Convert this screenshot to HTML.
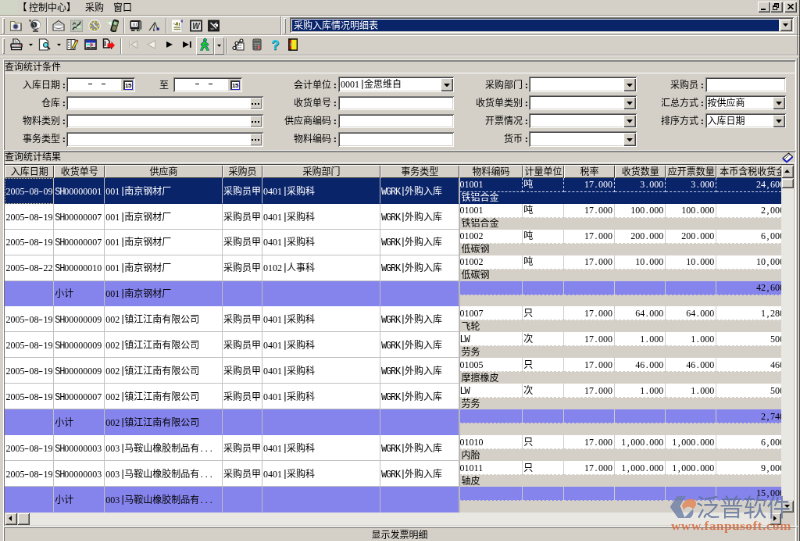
<!DOCTYPE html><html><head><meta charset="utf-8"><title>采购入库情况明细表</title><style>
html,body{margin:0;padding:0;background:#d4d0c8;overflow:hidden;width:800px;height:541px}
#app{position:absolute;left:0;top:0;width:1024px;height:693px;transform:scale(0.78125);transform-origin:0 0;will-change:transform;
 font-family:"Liberation Serif","Noto Sans CJK SC",sans-serif;font-size:12px;line-height:12px;color:#000;background:#d4d0c8;overflow:hidden}
#app div,#app span,#app svg{position:absolute;box-sizing:border-box;white-space:nowrap}
#app span.l{position:static;font-family:"Liberation Mono","Noto Sans CJK SC",monospace;letter-spacing:-1.2px;font-size:12px}
#app span.d{position:static;font-family:"Liberation Serif","Noto Sans CJK SC",serif}
#app span.p{position:static;display:inline-block;width:6px;text-align:center;font-family:"Liberation Serif","Noto Sans CJK SC",serif}
#app span.t{position:static}
.sunk{background:#fff;box-shadow:inset 1px 1px 0 #808080,inset -1px -1px 0 #fff,inset 2px 2px 0 #404040,inset -2px -2px 0 #d4d0c8}
.btn{background:#d4d0c8;box-shadow:inset 1px 1px 0 #fff,inset -1px -1px 0 #404040,inset -2px -2px 0 #808080}
.btn2{background:#d4d0c8;box-shadow:inset 1px 1px 0 #d4d0c8,inset -1px -1px 0 #404040,inset 2px 2px 0 #fff,inset -2px -2px 0 #808080}
.hd{background:#d4d0c8;box-shadow:inset 1px 1px 0 #fff,inset -1px -1px 0 #404040;text-align:center;height:17px;top:210.8px;padding-top:3px;overflow:hidden}
.lb{text-align:right;height:12px}
.grip{width:3px;box-shadow:inset 1px 1px 0 #fff,inset -1px -1px 0 #808080}
.sep{width:2px;border-left:1px solid #808080;border-right:1px solid #fff}
.c{overflow:hidden;height:32.93px;padding:10.8px 0 0 1px;border-right:1px solid #c0c0c0;border-bottom:1px solid #c0c0c0}
.r{overflow:hidden;height:18px;padding:2.5px 2px 0 1px;border-right:1px solid #cdcdcd;border-bottom:1px dashed #d4d0c8}
.r.sel{border-right:1px dashed #c8d0e8;border-bottom:1px dashed #c8d0e8}
.r.n{text-align:right}
.m{overflow:hidden;height:15px;padding:1.5px 0 0 3px;background:#d4d0c8}
#app span.b{font-family:"Liberation Mono",monospace;font-size:13px;position:relative;top:-1px}
#app span.h{transform:scaleX(1.5)}
.sel,.sel span{color:#fff}
</style></head><body><div id="app">
<div style="left:0;top:0;width:23px;height:18.5px;background:#d1d5c6"></div>
<div style="left:22.5px;top:4px">【<span class="t" style="margin-left:2.5px">控制中心】</span></div>
<div style="left:109px;top:4px">采购</div>
<div style="left:145px;top:4px">窗口</div>
<div class="btn" style="left:970px;top:2px;width:16px;height:14px">
<div style="left:4px;top:9px;width:6px;height:2px;background:#000"></div>
</div>
<div class="btn" style="left:986px;top:2px;width:16px;height:14px">
<div style="left:5px;top:2px;width:6px;height:6px;border:1px solid #000;border-top-width:2px"></div>
<div style="left:3px;top:5px;width:6px;height:6px;border:1px solid #000;border-top-width:2px;background:#d4d0c8"></div>
</div>
<div class="btn" style="left:1004px;top:2px;width:16px;height:14px">
<svg style="left:4px;top:3px" width="8" height="7" viewBox="0 0 8 7"><path d="M0.5 0 L7.5 7 M7.5 0 L0.5 7" stroke="#000" stroke-width="1.6" fill="none"/></svg>
</div>
<div style="left:0;top:19px;width:1024px;height:1px;background:#a8a49c"></div>
<div style="left:0;top:20.5px;width:1024px;height:1px;background:#fff"></div>
<div style="left:0;top:44.3px;width:1024px;height:1px;background:#a09c94"></div>
<div style="left:0;top:45.3px;width:1024px;height:1px;background:#fff"></div>
<div style="left:0;top:70px;width:1024px;height:1px;background:#a09c94"></div>
<div style="left:0;top:71px;width:1024px;height:1px;background:#fff"></div>
<div class="grip" style="left:3px;top:23px;height:20px"></div>
<div class="grip" style="left:3px;top:49px;height:20px"></div>
<div class="sep" style="left:359px;top:21px;height:24px"></div>
<div class="grip" style="left:363px;top:23px;height:20px"></div>
<div style="left:1020px;top:21px;width:1px;height:50px;background:#707070"></div>
<svg style="left:12px;top:25px" width="16" height="16" viewBox="0 0 16 16"><path d="M1.5 14V2.5h5l1 2h7V14z" fill="#f2f1ea"/><path d="M1.5 14V2.5h5l1 2h7" fill="none" stroke="#7c7c48" stroke-width="1.1"/><path d="M1 14h14V4.5" fill="none" stroke="#303030" stroke-width="1.2"/><circle cx="8" cy="9" r="3.8" fill="#b0b4cc"/><circle cx="8" cy="9" r="2.7" fill="#3a3f68"/></svg><svg style="left:37px;top:25px" width="16" height="16" viewBox="0 0 16 16"><rect x="0.5" y="0.5" width="2" height="2" fill="#101010"/><circle cx="8.5" cy="6.5" r="5.8" fill="#ececec" stroke="#4a4a4a" stroke-width="1.1"/><path d="M11 2.5a5 5 0 0 1 1 8" stroke="#fff" stroke-width="2" fill="none"/><circle cx="6.6" cy="6.8" r="3.7" fill="#2a3040"/><path d="M5.5 4.5l2.5 4" stroke="#a8a050" stroke-width="1.3"/><path d="M8.5 12v2" stroke="#404040" stroke-width="2.2"/><path d="M5 15h7" stroke="#303030" stroke-width="1.6"/></svg><svg style="left:67px;top:25px" width="16" height="16" viewBox="0 0 16 16"><path d="M1 6.5L8 1.5l7 5V14H1z" fill="#f0f0f0" stroke="#404040" stroke-width="1.2"/><path d="M2.5 7l5.5-3.5L13.5 7v1.5h-11z" fill="#b8b8b8"/><path d="M2.5 8.5h11" stroke="#fff" stroke-width="1.4"/><path d="M1.5 8.5c3 4 10 4 13 0" fill="none" stroke="#707070" stroke-width="1"/></svg><svg style="left:90px;top:25px" width="16" height="16" viewBox="0 0 16 16"><rect x="0.5" y="1" width="15" height="14.5" fill="#bcc4b8" stroke="#a0a49c" stroke-width="1"/><path d="M3 13l2-3 3 .5 1-3 3-2 1-3" stroke="#262a26" stroke-width="1.5" fill="none"/><path d="M3 7l2-3 2 2" stroke="#3a423a" stroke-width="1.2" fill="none"/><path d="M8 10l5-1" stroke="#e8ffe8" stroke-width="1.6"/><rect x="10" y="8.5" width="3.5" height="2.5" fill="#b8f0b8"/></svg><svg style="left:113px;top:25px" width="16" height="16" viewBox="0 0 16 16"><circle cx="8" cy="8" r="7.3" fill="#8e8e8e" stroke="#f4f4f4" stroke-width="1.2"/><g fill="#f4ec20"><rect x="7.2" y="1.6" width="1.6" height="2.4"/><rect x="7.2" y="12" width="1.6" height="2.4"/><rect x="1.6" y="7.2" width="2.4" height="1.6"/><rect x="12" y="7.2" width="2.4" height="1.6"/><rect x="3.4" y="3.4" width="1.8" height="1.8"/><rect x="10.8" y="3.4" width="1.8" height="1.8"/><rect x="3.4" y="10.8" width="1.8" height="1.8"/><rect x="10.8" y="10.8" width="1.8" height="1.8"/></g><path d="M8.4 8.4L5.8 4.2M8 8.2l3.4 1.6" stroke="#fff" stroke-width="1.3"/></svg><svg style="left:136px;top:25px" width="16" height="16" viewBox="0 0 16 16"><path d="M0.5 2.5l6 .5 .5 5z" fill="#f4fff4"/><path d="M1 2l4 1" stroke="#a8e8b0" stroke-width="1.4"/><g transform="rotate(16 10.5 8)"><rect x="7.5" y="0.6" width="6.4" height="15" rx="1.8" fill="#3c3c30" stroke="#0c0c0c" stroke-width="1.2"/><rect x="8.6" y="2.6" width="4.2" height="4.2" fill="#98d8a0"/><rect x="8.6" y="8" width="4.2" height="5.6" fill="#7c8464"/><path d="M13.5 2v11" stroke="#8a8a40" stroke-width=".8"/></g></svg><svg style="left:166px;top:25px" width="16" height="16" viewBox="0 0 16 16"><rect x="0.5" y="1" width="14" height="11.5" rx="1.5" fill="#1c1c1c"/><rect x="2" y="3" width="8.5" height="6.5" fill="#f8f8f8"/><path d="M4.5 4.5v3.5M6.5 4.5v3.5M8.5 4.5v3.5" stroke="#808080" stroke-width=".9"/><path d="M12 2.5h3.5v10H12z" fill="#6c6c6c"/><path d="M2 13.8h4.5M9 13.8h4" stroke="#181818" stroke-width="1.8"/><rect x="11" y="13" width="2.4" height="1.4" fill="#70b070"/></svg><svg style="left:189px;top:25px" width="16" height="16" viewBox="0 0 16 16"><path d="M2 14L9.5 3.5" stroke="#282828" stroke-width="1.2" fill="none"/><path d="M9.5 3.5L7.5 14M9.5 3.5l3 8" stroke="#404040" stroke-width="1" fill="none"/><path d="M7 13.8h2" stroke="#202020" stroke-width="1.4"/><rect x="11.5" y="10.5" width="3.2" height="3.2" fill="#18247c"/><rect x="11.5" y="0.5" width="1.8" height="2.6" fill="#b8ecb8"/></svg><svg style="left:219px;top:25px" width="16" height="16" viewBox="0 0 16 16"><rect x="1" y="0.5" width="13" height="15" fill="#fdfdfd"/><rect x="13" y="0.5" width="2" height="14" fill="#c8c8d8"/><rect x="12.5" y="0.5" width="2.5" height="3" fill="#5a5aa0"/><path d="M2.5 5.5l2-1.2v2.4z" fill="#909050"/><rect x="6" y="3.5" width="3" height="4" fill="#8c8c38"/><path d="M5 6.5h1M10.5 4v4" stroke="#707030" stroke-width="1.2"/><path d="M3.5 10h8.5M3.5 12.5h8.5" stroke="#8a8a4a" stroke-width="1.5"/></svg><svg style="left:243px;top:25px" width="16" height="16" viewBox="0 0 16 16"><rect x="1" y="1.5" width="14" height="13" fill="#d8d8d8" stroke="#2c2c2c" stroke-width="2"/><rect x="2.6" y="3.1" width="10.8" height="9.8" fill="none" stroke="#f4f4f4" stroke-width=".8"/><text x="8" y="12" font-family="Liberation Sans,sans-serif" font-style="italic" font-weight="bold" font-size="10" text-anchor="middle" fill="#282828">W</text></svg><svg style="left:266px;top:25px" width="16" height="16" viewBox="0 0 16 16"><rect x="0.8" y="1.3" width="13.4" height="13.4" fill="#262626" stroke="#161616" stroke-width="1.4"/><path d="M3.5 4l7.5 7.5M11.5 4L7 8" stroke="#f0f0f0" stroke-width="1.5" fill="none"/><rect x="10" y="6" width="3" height="3" fill="#fff"/><path d="M3.5 12h4" stroke="#d0d0d0" stroke-width="1"/></svg><div class="sep" style="left:59px;top:23px;height:20px"></div><div class="sep" style="left:158px;top:23px;height:20px"></div><div class="sep" style="left:212px;top:23px;height:20px"></div>
<svg style="left:13px;top:49px" width="16" height="16" viewBox="0 0 16 16"><path d="M4 7V1h5l3 3v3" fill="#fff" stroke="#202020" stroke-width="1.2"/><path d="M5.5 3h2.5M5.5 5h4.5" stroke="#606060" stroke-width="1"/><rect x="1" y="7" width="14" height="4.6" rx="1" fill="#d0d0d0" stroke="#101010" stroke-width="1.5"/><rect x="1.6" y="11.6" width="12.8" height="3" fill="#fff" stroke="#101010" stroke-width="1.3"/><rect x="11.5" y="8.5" width="2.5" height="1.2" fill="#f04848"/></svg><svg style="left:49px;top:49px" width="16" height="16" viewBox="0 0 16 16"><path d="M1.5 1h8l3 3v11h-11z" fill="#fff" stroke="#303030" stroke-width="1.2"/><circle cx="9.5" cy="8.5" r="3" fill="#50e0e8" stroke="#303030" stroke-width="1.2"/><path d="M8.5 7.5l1 1" stroke="#fff" stroke-width="1"/><path d="M11.8 10.8l3.2 3.4" stroke="#202020" stroke-width="1.8"/></svg><svg style="left:85px;top:49px" width="16" height="16" viewBox="0 0 16 16"><rect x="1" y="1.5" width="10" height="13" fill="#fff" stroke="#303030" stroke-width="1"/><path d="M3 3v10" stroke="#303030" stroke-width="1.4" stroke-dasharray="1 1"/><path d="M6 2v12" stroke="#202020" stroke-width="1"/><path d="M14 2.5L8 13" stroke="#202020" stroke-width="3.4"/><path d="M13.4 3.8L8.3 12.6" stroke="#f0e020" stroke-width="1.8"/><path d="M14.3 2l-.8 1.5" stroke="#e02020" stroke-width="2"/><path d="M7.5 14.5l.6-2 1 .8z" fill="#202020"/></svg><svg style="left:108px;top:49px" width="16" height="16" viewBox="0 0 16 16"><rect x="1" y="2" width="14" height="12" fill="#e0e0e0" stroke="#181818" stroke-width="1.6"/><rect x="1.6" y="2.6" width="12.8" height="3" fill="#1830c0"/><rect x="3" y="7" width="4" height="2" fill="#40e0e0"/><rect x="8.6" y="6.6" width="2" height="3.4" fill="#e02020"/><rect x="11" y="7" width="3" height="3" fill="#d0d0ff"/><path d="M2.5 11.8h5M8.5 11.8h5.5" stroke="#303030" stroke-width="1.8"/><path d="M8 6v7" stroke="#404040" stroke-width=".8"/></svg><svg style="left:131px;top:49px" width="16" height="16" viewBox="0 0 16 16"><path d="M1.5 1h5l2.5 2.5V12h-7.5z" fill="#f0f0f0" stroke="#181818" stroke-width="1.5"/><path d="M3.5 3.5v6.5" stroke="#303030" stroke-width="1.6"/><path d="M6.5 6.5h5V4l4.5 5-4.5 5v-2.5h-5z" fill="#f01010"/><path d="M6.5 11.8h5V14" stroke="#500000" stroke-width=".9" fill="none"/></svg><svg style="left:163px;top:49px" width="16" height="16" viewBox="0 0 16 16"><path d="M3.5 3v10" stroke="#fff" stroke-width="2.2"/><path d="M12.5 3.5v9L4.5 8z" fill="#e8e6e0" stroke="#b8b4a8" stroke-width="1.2"/><path d="M3 3v10" stroke="#b0aca0" stroke-width="1.4"/></svg><svg style="left:186px;top:49px" width="16" height="16" viewBox="0 0 16 16"><path d="M12.5 3v10L3 8z" fill="#f4f2ee" stroke="#b8b4a8" stroke-width="1.2"/></svg><svg style="left:209px;top:49px" width="16" height="16" viewBox="0 0 16 16"><path d="M4 4v8l8-4z" fill="#000"/></svg><svg style="left:232px;top:49px" width="16" height="16" viewBox="0 0 16 16"><path d="M2 4v8l8-4z" fill="#000"/><path d="M11.8 4v8" stroke="#000" stroke-width="1.8"/></svg><svg style="left:254px;top:49px" width="16" height="16" viewBox="0 0 16 16"><circle cx="8.5" cy="2.2" r="2" fill="#10d818" stroke="#1030a0" stroke-width=".7"/><path d="M8 4.5L6.5 9.5M7.5 5.5L4.5 8M8 5.5l3.5 2.5M6.5 9.5L4 15M6.8 9.5l3.2 2 2 3.5" stroke="#1030a0" stroke-width="3.2" fill="none" stroke-linecap="round"/><path d="M8 4.5L6.5 9.5M7.5 5.5L4.5 8M8 5.5l3.5 2.5M6.5 9.5L4 15M6.8 9.5l3.2 2 2 3.5" stroke="#10d818" stroke-width="2" fill="none" stroke-linecap="round"/></svg><svg style="left:297px;top:49px" width="16" height="16" viewBox="0 0 16 16"><rect x="6" y="6" width="9" height="9" fill="#fff" stroke="#202020" stroke-width="1"/><path d="M8 9h5M8 12h5" stroke="#202020" stroke-width="1.2" stroke-dasharray="1.5 1"/><path d="M3 12.5L6 7l5.5-3.5" stroke="#101010" stroke-width="1.2" fill="none"/><circle cx="3" cy="12.5" r="2" fill="#fff" stroke="#101010" stroke-width="1.2"/><circle cx="6" cy="6.5" r="2" fill="#fff" stroke="#101010" stroke-width="1.2"/><circle cx="12" cy="3" r="2" fill="#fff" stroke="#101010" stroke-width="1.2"/></svg><svg style="left:321px;top:49px" width="16" height="16" viewBox="0 0 16 16"><rect x="3" y="1" width="10" height="14" rx="1.5" fill="#909090" stroke="#404040" stroke-width="1.2"/><rect x="4" y="2.8" width="8" height="3" fill="#586058"/><g fill="#505050"><rect x="4" y="7.5" width="2" height="1.6"/><rect x="7" y="7.5" width="2" height="1.6"/><rect x="10" y="7.5" width="2" height="1.6"/><rect x="4" y="10" width="2" height="1.6"/><rect x="7" y="10" width="2" height="1.6"/><rect x="4" y="12.4" width="2" height="1.6"/><rect x="7" y="12.4" width="2" height="1.6"/></g><rect x="10" y="10" width="2" height="4" fill="#f04040"/></svg><svg style="left:345px;top:49px" width="16" height="16" viewBox="0 0 16 16"><text x="8" y="14.5" font-family="Liberation Sans,sans-serif" font-weight="bold" font-size="17" text-anchor="middle" fill="#0a8090" stroke="#0a6070" stroke-width=".4">?</text><text x="7.4" y="14" font-family="Liberation Sans,sans-serif" font-weight="bold" font-size="17" text-anchor="middle" fill="#28c8e8">?</text></svg><svg style="left:367px;top:49px" width="16" height="16" viewBox="0 0 16 16"><rect x="2.5" y="0.8" width="11" height="14.6" fill="#2a1a10" stroke="#101010" stroke-width="1"/><rect x="6" y="1.8" width="6.6" height="12.6" fill="#f0e818"/><rect x="3.6" y="2" width="2.2" height="12" fill="#d02018"/><path d="M5 6v4" stroke="#40c0c0" stroke-width="1"/></svg><svg style="left:37px;top:56px" width="5" height="3" viewBox="0 0 5 3"><path d="M0 0h5L2.5 3z" fill="#000"/></svg><svg style="left:73px;top:56px" width="5" height="3" viewBox="0 0 5 3"><path d="M0 0h5L2.5 3z" fill="#000"/></svg><div style="left:251px;top:47px;width:23px;height:23px;box-shadow:inset 1px 1px 0 #fff,inset -1px -1px 0 #808080"></div><div style="left:274px;top:47px;width:13px;height:23px;box-shadow:inset 1px 1px 0 #fff,inset -1px -1px 0 #808080"></div><svg style="left:278px;top:57px" width="5" height="3" viewBox="0 0 5 3"><path d="M0 0h5L2.5 3z" fill="#000"/></svg><div class="sep" style="left:154px;top:49px;height:20px"></div><div class="sep" style="left:290px;top:49px;height:20px"></div>
<div class="sunk" style="left:371px;top:22px;width:645px;height:20px">
<div style="left:3px;top:3px;width:623px;height:15px;background:#0a246a;color:#fff;padding:1.5px 0 0 2px">采购入库情况明细表</div>
<div class="btn2" style="left:627px;top:2px;width:16px;height:16px"><svg style="left:4px;top:6px" width="7" height="4" viewBox="0 0 7 4"><path d="M0 0H7L3.5 4Z" fill="#000"/></svg></div>
</div>
<div style="left:4px;top:76.0px;width:1014px;height:116px;border-left:1px solid #fff;border-top:1px solid #eeece8"></div>
<div style="left:5px;top:77.0px;width:1014px;height:115px;border-left:1px solid #6a6a6a;border-top:2px solid #858585;border-right:2px solid #fff"></div>
<div style="left:6px;top:93px;width:1011px;height:1px;background:#fff"></div>
<div style="left:6px;top:80px">查询统计条件</div>
<div class="lb" style="left:-16px;top:102.5px;width:100px">入库日期<span class="p" style="width:7px;text-align:right;font-weight:bold;font-size:13px">:</span></div>
<div class="sunk" style="left:85px;top:99.3px;width:88px;height:18.6px">
<div style="left:28px;top:8px;width:5px;height:1px;background:#000"></div><div style="left:45px;top:8px;width:5px;height:1px;background:#000"></div>
<div style="left:70px;top:2px;width:16px;height:15.6px;background:#d4d0c8"><div style="left:2.5px;top:2px;width:12px;height:12px;border:1px solid #303030;border-width:2px 1px 1px 2px;border-right-color:#2828c8;border-bottom-color:#2828c8;background:#fff;font-size:8px;line-height:9px;font-weight:bold;text-align:center;font-family:'Liberation Sans',sans-serif;letter-spacing:-.5px">15</div></div>
</div>
<div style="left:204px;top:102.5px">至</div>
<div class="sunk" style="left:222px;top:99.3px;width:88px;height:18.6px">
<div style="left:28px;top:8px;width:5px;height:1px;background:#000"></div><div style="left:45px;top:8px;width:5px;height:1px;background:#000"></div>
<div style="left:70px;top:2px;width:16px;height:15.6px;background:#d4d0c8"><div style="left:2.5px;top:2px;width:12px;height:12px;border:1px solid #303030;border-width:2px 1px 1px 2px;border-right-color:#2828c8;border-bottom-color:#2828c8;background:#fff;font-size:8px;line-height:9px;font-weight:bold;text-align:center;font-family:'Liberation Sans',sans-serif;letter-spacing:-.5px">15</div></div>
</div>
<div class="lb" style="left:-16px;top:125.7px;width:100px">仓库<span class="p" style="width:7px;text-align:right;font-weight:bold;font-size:13px">:</span></div>
<div class="sunk" style="left:85.0px;top:122.5px;width:251.6px;height:18.6px"><div style="left:3px;top:3px"></div></div>
<div style="left:319.6px;top:124.5px;width:15px;height:14.6px;background:#d4d0c8;box-shadow:inset 1px 1px 0 #fff,inset -1px -1px 0 #808080"><div style="left:2.5px;top:7px;width:2px;height:2px;background:#000"></div><div style="left:6.6px;top:7px;width:2px;height:2px;background:#000"></div><div style="left:10.7px;top:7px;width:2px;height:2px;background:#000"></div></div>
<div class="lb" style="left:-16px;top:148.9px;width:100px">物料类别<span class="p" style="width:7px;text-align:right;font-weight:bold;font-size:13px">:</span></div>
<div class="sunk" style="left:85.0px;top:145.7px;width:251.6px;height:18.6px"><div style="left:3px;top:3px"></div></div>
<div style="left:319.6px;top:147.7px;width:15px;height:14.6px;background:#d4d0c8;box-shadow:inset 1px 1px 0 #fff,inset -1px -1px 0 #808080"><div style="left:2.5px;top:7px;width:2px;height:2px;background:#000"></div><div style="left:6.6px;top:7px;width:2px;height:2px;background:#000"></div><div style="left:10.7px;top:7px;width:2px;height:2px;background:#000"></div></div>
<div class="lb" style="left:-16px;top:172.2px;width:100px">事务类型<span class="p" style="width:7px;text-align:right;font-weight:bold;font-size:13px">:</span></div>
<div class="sunk" style="left:85.0px;top:169.0px;width:251.6px;height:18.6px"><div style="left:3px;top:3px"></div></div>
<div style="left:319.6px;top:171.0px;width:15px;height:14.6px;background:#d4d0c8;box-shadow:inset 1px 1px 0 #fff,inset -1px -1px 0 #808080"><div style="left:2.5px;top:7px;width:2px;height:2px;background:#000"></div><div style="left:6.6px;top:7px;width:2px;height:2px;background:#000"></div><div style="left:10.7px;top:7px;width:2px;height:2px;background:#000"></div></div>
<div class="lb" style="left:331px;top:102.5px;width:100px">会计单位<span class="p" style="width:7px;text-align:right;font-weight:bold;font-size:13px">:</span></div>
<div class="sunk" style="left:433.0px;top:98.3px;width:147.5px;height:19.5px"><div style="left:3px;top:4px"><span class="d">0001</span><span class="p b">|</span>金思维自</div>
<div class="btn" style="left:130.5px;top:2px;width:16px;height:16.5px"><svg style="left:4px;top:6.5px" width="8" height="4.5" viewBox="0 0 7 4"><path d="M0 0H7L3.5 4Z" fill="#000"/></svg></div></div>
<div class="lb" style="left:331px;top:125.7px;width:100px">收货单号<span class="p" style="width:7px;text-align:right;font-weight:bold;font-size:13px">:</span></div>
<div class="sunk" style="left:433.0px;top:122.5px;width:147.5px;height:18.6px"><div style="left:3px;top:3px"></div></div>
<div class="lb" style="left:331px;top:148.9px;width:100px">供应商编码<span class="p" style="width:7px;text-align:right;font-weight:bold;font-size:13px">:</span></div>
<div class="sunk" style="left:433.0px;top:145.7px;width:147.5px;height:18.6px"><div style="left:3px;top:3px"></div></div>
<div class="lb" style="left:331px;top:172.2px;width:100px">物料编码<span class="p" style="width:7px;text-align:right;font-weight:bold;font-size:13px">:</span></div>
<div class="sunk" style="left:433.0px;top:169.0px;width:147.5px;height:18.6px"><div style="left:3px;top:3px"></div></div>
<div class="lb" style="left:576px;top:102.5px;width:100px">采购部门<span class="p" style="width:7px;text-align:right;font-weight:bold;font-size:13px">:</span></div>
<div class="sunk" style="left:677.3px;top:98.3px;width:138.0px;height:19.5px"><div style="left:3px;top:4px"></div>
<div class="btn" style="left:121.0px;top:2px;width:16px;height:16.5px"><svg style="left:4px;top:6.5px" width="8" height="4.5" viewBox="0 0 7 4"><path d="M0 0H7L3.5 4Z" fill="#000"/></svg></div></div>
<div class="lb" style="left:576px;top:125.7px;width:100px">收货单类别<span class="p" style="width:7px;text-align:right;font-weight:bold;font-size:13px">:</span></div>
<div class="sunk" style="left:677.3px;top:121.5px;width:138.0px;height:19.5px"><div style="left:3px;top:4px"></div>
<div class="btn" style="left:121.0px;top:2px;width:16px;height:16.5px"><svg style="left:4px;top:6.5px" width="8" height="4.5" viewBox="0 0 7 4"><path d="M0 0H7L3.5 4Z" fill="#000"/></svg></div></div>
<div class="lb" style="left:576px;top:148.9px;width:100px">开票情况<span class="p" style="width:7px;text-align:right;font-weight:bold;font-size:13px">:</span></div>
<div class="sunk" style="left:677.3px;top:144.7px;width:138.0px;height:19.5px"><div style="left:3px;top:4px"></div>
<div class="btn" style="left:121.0px;top:2px;width:16px;height:16.5px"><svg style="left:4px;top:6.5px" width="8" height="4.5" viewBox="0 0 7 4"><path d="M0 0H7L3.5 4Z" fill="#000"/></svg></div></div>
<div class="lb" style="left:576px;top:172.2px;width:100px">货币<span class="p" style="width:7px;text-align:right;font-weight:bold;font-size:13px">:</span></div>
<div class="sunk" style="left:677.3px;top:168.0px;width:138.0px;height:19.5px"><div style="left:3px;top:4px"></div>
<div class="btn" style="left:121.0px;top:2px;width:16px;height:16.5px"><svg style="left:4px;top:6.5px" width="8" height="4.5" viewBox="0 0 7 4"><path d="M0 0H7L3.5 4Z" fill="#000"/></svg></div></div>
<div class="lb" style="left:801px;top:102.5px;width:100px">采购员<span class="p" style="width:7px;text-align:right;font-weight:bold;font-size:13px">:</span></div>
<div class="sunk" style="left:902.6px;top:99.3px;width:103.4px;height:18.6px"><div style="left:3px;top:3px"></div></div>
<div class="lb" style="left:801px;top:125.7px;width:100px">汇总方式<span class="p" style="width:7px;text-align:right;font-weight:bold;font-size:13px">:</span></div>
<div class="sunk" style="left:902.6px;top:121.5px;width:103.4px;height:19.5px"><div style="left:3px;top:4px">按供应商</div>
<div class="btn" style="left:86.4px;top:2px;width:16px;height:16.5px"><svg style="left:4px;top:6.5px" width="8" height="4.5" viewBox="0 0 7 4"><path d="M0 0H7L3.5 4Z" fill="#000"/></svg></div></div>
<div class="lb" style="left:801px;top:148.9px;width:100px">排序方式<span class="p" style="width:7px;text-align:right;font-weight:bold;font-size:13px">:</span></div>
<div class="sunk" style="left:902.6px;top:144.7px;width:103.4px;height:19.5px"><div style="left:3px;top:4px">入库日期</div>
<div class="btn" style="left:86.4px;top:2px;width:16px;height:16.5px"><svg style="left:4px;top:6.5px" width="8" height="4.5" viewBox="0 0 7 4"><path d="M0 0H7L3.5 4Z" fill="#000"/></svg></div></div>
<div style="left:4px;top:192.0px;width:1014px;height:482px;border-left:1px solid #fff;border-top:1px solid #eeece8"></div>
<div style="left:5px;top:193.0px;width:1014px;height:481px;border-left:1px solid #6a6a6a;border-top:2px solid #858585;border-right:2px solid #fff"></div>
<div style="left:6px;top:208px;width:1011px;height:1px;background:#fff"></div>
<div style="left:6px;top:195px">查询统计结果</div>
<svg style="left:1001px;top:195px" width="15" height="14" viewBox="0 0 15 14"><path d="M1 7.5L8.5 1l5 4.5L6 12z" fill="#fff" stroke="#202020" stroke-width="1.1"/><path d="M10 2.5L3 9" stroke="#202020" stroke-width=".8"/><path d="M1 8l5 4.5L13.5 6" stroke="#2020c0" stroke-width="1.8" fill="none"/></svg>
<div style="left:6px;top:209.8px;width:1010px;height:462px;background:#d4d0c8;border-top:1px solid #404040"></div>
<div class="hd" style="left:6.4px;width:62.8px">入库日期</div>
<div class="hd" style="left:69.2px;width:65.0px">收货单号</div>
<div class="hd" style="left:134.2px;width:150.8px">供应商</div>
<div class="hd" style="left:285.0px;width:51.0px">采购员</div>
<div class="hd" style="left:336.0px;width:151.0px">采购部门</div>
<div class="hd" style="left:487.0px;width:100.6px">事务类型</div>
<div style="left:587.6px;top:0;width:412.4px;height:656px;overflow:hidden">
<div class="hd" style="left:0.0px;width:81.7px">物料编码</div>
<div class="hd" style="left:81.7px;width:52.7px">计量单位</div>
<div class="hd" style="left:134.4px;width:65.0px">税率</div>
<div class="hd" style="left:199.4px;width:65.3px">收货数量</div>
<div class="hd" style="left:264.7px;width:65.0px">应开票数量</div>
<div class="hd" style="left:329.7px;width:107.7px;text-align:left;padding-left:4px">本币含税收货金额</div>
</div>
<div class="c sel" style="left:6.4px;top:227.80px;width:62.8px;background:#0a246a;border-bottom-color:#0a246a"><span class="d">2005</span><span class="p h">-</span><span class="d">08</span><span class="p h">-</span><span class="d">09</span></div>
<div class="c sel" style="left:69.2px;top:227.80px;width:65.0px;background:#0a246a;border-bottom-color:#0a246a"><span class="l">SH</span><span class="d">00000001</span></div>
<div class="c sel" style="left:134.2px;top:227.80px;width:150.8px;background:#0a246a;border-bottom-color:#0a246a"><span class="d">001</span><span class="p b">|</span>南京钢材厂</div>
<div class="c sel" style="left:285.0px;top:227.80px;width:51.0px;background:#0a246a;border-bottom-color:#0a246a">采购员甲</div>
<div class="c sel" style="left:336.0px;top:227.80px;width:151.0px;background:#0a246a;border-bottom-color:#0a246a"><span class="d">0401</span><span class="p b">|</span>采购科</div>
<div class="c sel" style="left:487.0px;top:227.80px;width:100.6px;background:#0a246a;border-bottom-color:#0a246a"><span class="l">WGRK</span><span class="p b">|</span>外购入库</div>
<div style="left:587.6px;top:227.80px;width:412.4px;height:32.93px;overflow:hidden">
<div class="r sel" style="left:0.0px;top:0;width:81.7px;background:#0a246a"><span class="d">01001</span></div>
<div class="r sel" style="left:81.7px;top:0;width:52.7px;background:#0a246a">吨</div>
<div class="r n sel" style="left:134.4px;top:0;width:65.0px;background:#0a246a"><span class="d">17</span><span class="p">.</span><span class="d">000</span></div>
<div class="r n sel" style="left:199.4px;top:0;width:65.3px;background:#0a246a"><span class="d">3</span><span class="p">.</span><span class="d">000</span></div>
<div class="r n sel" style="left:264.7px;top:0;width:65.0px;background:#0a246a"><span class="d">3</span><span class="p">.</span><span class="d">000</span></div>
<div class="r n sel" style="left:329.7px;top:0;width:107.7px;background:#0a246a"><span class="d">24</span><span class="p">,</span><span class="d">600</span><span class="p">.</span><span class="d">00</span></div>
<div class="m sel" style="left:0;top:18px;width:437px;background:#0a246a">铁铝合金</div>
</div>
<div class="c" style="left:6.4px;top:260.73px;width:62.8px;background:#fff"><span class="d">2005</span><span class="p h">-</span><span class="d">08</span><span class="p h">-</span><span class="d">19</span></div>
<div class="c" style="left:69.2px;top:260.73px;width:65.0px;background:#fff"><span class="l">SH</span><span class="d">00000007</span></div>
<div class="c" style="left:134.2px;top:260.73px;width:150.8px;background:#fff"><span class="d">001</span><span class="p b">|</span>南京钢材厂</div>
<div class="c" style="left:285.0px;top:260.73px;width:51.0px;background:#fff">采购员甲</div>
<div class="c" style="left:336.0px;top:260.73px;width:151.0px;background:#fff"><span class="d">0401</span><span class="p b">|</span>采购科</div>
<div class="c" style="left:487.0px;top:260.73px;width:100.6px;background:#fff"><span class="l">WGRK</span><span class="p b">|</span>外购入库</div>
<div style="left:587.6px;top:260.73px;width:412.4px;height:32.93px;overflow:hidden">
<div class="r" style="left:0.0px;top:0;width:81.7px;background:#fff"><span class="d">01001</span></div>
<div class="r" style="left:81.7px;top:0;width:52.7px;background:#fff">吨</div>
<div class="r n" style="left:134.4px;top:0;width:65.0px;background:#fff"><span class="d">17</span><span class="p">.</span><span class="d">000</span></div>
<div class="r n" style="left:199.4px;top:0;width:65.3px;background:#fff"><span class="d">100</span><span class="p">.</span><span class="d">000</span></div>
<div class="r n" style="left:264.7px;top:0;width:65.0px;background:#fff"><span class="d">100</span><span class="p">.</span><span class="d">000</span></div>
<div class="r n" style="left:329.7px;top:0;width:107.7px;background:#fff"><span class="d">2</span><span class="p">,</span><span class="d">000</span><span class="p">.</span><span class="d">00</span></div>
<div class="m" style="left:0;top:18px;width:437px;background:#d4d0c8">铁铝合金</div>
</div>
<div class="c" style="left:6.4px;top:293.66px;width:62.8px;background:#fff"><span class="d">2005</span><span class="p h">-</span><span class="d">08</span><span class="p h">-</span><span class="d">19</span></div>
<div class="c" style="left:69.2px;top:293.66px;width:65.0px;background:#fff"><span class="l">SH</span><span class="d">00000007</span></div>
<div class="c" style="left:134.2px;top:293.66px;width:150.8px;background:#fff"><span class="d">001</span><span class="p b">|</span>南京钢材厂</div>
<div class="c" style="left:285.0px;top:293.66px;width:51.0px;background:#fff">采购员甲</div>
<div class="c" style="left:336.0px;top:293.66px;width:151.0px;background:#fff"><span class="d">0401</span><span class="p b">|</span>采购科</div>
<div class="c" style="left:487.0px;top:293.66px;width:100.6px;background:#fff"><span class="l">WGRK</span><span class="p b">|</span>外购入库</div>
<div style="left:587.6px;top:293.66px;width:412.4px;height:32.93px;overflow:hidden">
<div class="r" style="left:0.0px;top:0;width:81.7px;background:#fff"><span class="d">01002</span></div>
<div class="r" style="left:81.7px;top:0;width:52.7px;background:#fff">吨</div>
<div class="r n" style="left:134.4px;top:0;width:65.0px;background:#fff"><span class="d">17</span><span class="p">.</span><span class="d">000</span></div>
<div class="r n" style="left:199.4px;top:0;width:65.3px;background:#fff"><span class="d">200</span><span class="p">.</span><span class="d">000</span></div>
<div class="r n" style="left:264.7px;top:0;width:65.0px;background:#fff"><span class="d">200</span><span class="p">.</span><span class="d">000</span></div>
<div class="r n" style="left:329.7px;top:0;width:107.7px;background:#fff"><span class="d">6</span><span class="p">,</span><span class="d">000</span><span class="p">.</span><span class="d">00</span></div>
<div class="m" style="left:0;top:18px;width:437px;background:#d4d0c8">低碳钢</div>
</div>
<div class="c" style="left:6.4px;top:326.59px;width:62.8px;background:#fff"><span class="d">2005</span><span class="p h">-</span><span class="d">08</span><span class="p h">-</span><span class="d">22</span></div>
<div class="c" style="left:69.2px;top:326.59px;width:65.0px;background:#fff"><span class="l">SH</span><span class="d">00000010</span></div>
<div class="c" style="left:134.2px;top:326.59px;width:150.8px;background:#fff"><span class="d">001</span><span class="p b">|</span>南京钢材厂</div>
<div class="c" style="left:285.0px;top:326.59px;width:51.0px;background:#fff">采购员甲</div>
<div class="c" style="left:336.0px;top:326.59px;width:151.0px;background:#fff"><span class="d">0102</span><span class="p b">|</span>人事科</div>
<div class="c" style="left:487.0px;top:326.59px;width:100.6px;background:#fff"><span class="l">WGRK</span><span class="p b">|</span>外购入库</div>
<div style="left:587.6px;top:326.59px;width:412.4px;height:32.93px;overflow:hidden">
<div class="r" style="left:0.0px;top:0;width:81.7px;background:#fff"><span class="d">01002</span></div>
<div class="r" style="left:81.7px;top:0;width:52.7px;background:#fff">吨</div>
<div class="r n" style="left:134.4px;top:0;width:65.0px;background:#fff"><span class="d">17</span><span class="p">.</span><span class="d">000</span></div>
<div class="r n" style="left:199.4px;top:0;width:65.3px;background:#fff"><span class="d">10</span><span class="p">.</span><span class="d">000</span></div>
<div class="r n" style="left:264.7px;top:0;width:65.0px;background:#fff"><span class="d">10</span><span class="p">.</span><span class="d">000</span></div>
<div class="r n" style="left:329.7px;top:0;width:107.7px;background:#fff"><span class="d">10</span><span class="p">,</span><span class="d">000</span><span class="p">.</span><span class="d">00</span></div>
<div class="m" style="left:0;top:18px;width:437px;background:#d4d0c8">低碳钢</div>
</div>
<div class="c" style="left:6.4px;top:359.52px;width:62.8px;background:#8583ec;border-bottom-color:#8583ec"></div>
<div class="c" style="left:69.2px;top:359.52px;width:65.0px;background:#8583ec;border-bottom-color:#8583ec">小计</div>
<div class="c" style="left:134.2px;top:359.52px;width:150.8px;background:#8583ec;border-bottom-color:#8583ec"><span class="d">001</span><span class="p b">|</span>南京钢材厂</div>
<div class="c" style="left:285.0px;top:359.52px;width:51.0px;background:#8583ec;border-bottom-color:#8583ec"></div>
<div class="c" style="left:336.0px;top:359.52px;width:151.0px;background:#8583ec;border-bottom-color:#8583ec"></div>
<div class="c" style="left:487.0px;top:359.52px;width:100.6px;background:#8583ec;border-bottom-color:#8583ec"></div>
<div style="left:587.6px;top:359.52px;width:412.4px;height:32.93px;overflow:hidden">
<div class="r" style="left:0.0px;top:0;width:81.7px;background:#8583ec"></div>
<div class="r" style="left:81.7px;top:0;width:52.7px;background:#8583ec"></div>
<div class="r n" style="left:134.4px;top:0;width:65.0px;background:#8583ec"></div>
<div class="r n" style="left:199.4px;top:0;width:65.3px;background:#8583ec"></div>
<div class="r n" style="left:264.7px;top:0;width:65.0px;background:#8583ec"></div>
<div class="r n" style="left:329.7px;top:0;width:107.7px;background:#8583ec"><span class="d">42</span><span class="p">,</span><span class="d">600</span><span class="p">.</span><span class="d">00</span></div>
<div class="m" style="left:0;top:18px;width:437px;background:#d4d0c8"></div>
</div>
<div class="c" style="left:6.4px;top:392.45px;width:62.8px;background:#fff"><span class="d">2005</span><span class="p h">-</span><span class="d">08</span><span class="p h">-</span><span class="d">19</span></div>
<div class="c" style="left:69.2px;top:392.45px;width:65.0px;background:#fff"><span class="l">SH</span><span class="d">00000009</span></div>
<div class="c" style="left:134.2px;top:392.45px;width:150.8px;background:#fff"><span class="d">002</span><span class="p b">|</span>镇江江南有限公司</div>
<div class="c" style="left:285.0px;top:392.45px;width:51.0px;background:#fff">采购员甲</div>
<div class="c" style="left:336.0px;top:392.45px;width:151.0px;background:#fff"><span class="d">0401</span><span class="p b">|</span>采购科</div>
<div class="c" style="left:487.0px;top:392.45px;width:100.6px;background:#fff"><span class="l">WGRK</span><span class="p b">|</span>外购入库</div>
<div style="left:587.6px;top:392.45px;width:412.4px;height:32.93px;overflow:hidden">
<div class="r" style="left:0.0px;top:0;width:81.7px;background:#fff"><span class="d">01007</span></div>
<div class="r" style="left:81.7px;top:0;width:52.7px;background:#fff">只</div>
<div class="r n" style="left:134.4px;top:0;width:65.0px;background:#fff"><span class="d">17</span><span class="p">.</span><span class="d">000</span></div>
<div class="r n" style="left:199.4px;top:0;width:65.3px;background:#fff"><span class="d">64</span><span class="p">.</span><span class="d">000</span></div>
<div class="r n" style="left:264.7px;top:0;width:65.0px;background:#fff"><span class="d">64</span><span class="p">.</span><span class="d">000</span></div>
<div class="r n" style="left:329.7px;top:0;width:107.7px;background:#fff"><span class="d">1</span><span class="p">,</span><span class="d">280</span><span class="p">.</span><span class="d">00</span></div>
<div class="m" style="left:0;top:18px;width:437px;background:#d4d0c8">飞轮</div>
</div>
<div class="c" style="left:6.4px;top:425.38px;width:62.8px;background:#fff"><span class="d">2005</span><span class="p h">-</span><span class="d">08</span><span class="p h">-</span><span class="d">19</span></div>
<div class="c" style="left:69.2px;top:425.38px;width:65.0px;background:#fff"><span class="l">SH</span><span class="d">00000009</span></div>
<div class="c" style="left:134.2px;top:425.38px;width:150.8px;background:#fff"><span class="d">002</span><span class="p b">|</span>镇江江南有限公司</div>
<div class="c" style="left:285.0px;top:425.38px;width:51.0px;background:#fff">采购员甲</div>
<div class="c" style="left:336.0px;top:425.38px;width:151.0px;background:#fff"><span class="d">0401</span><span class="p b">|</span>采购科</div>
<div class="c" style="left:487.0px;top:425.38px;width:100.6px;background:#fff"><span class="l">WGRK</span><span class="p b">|</span>外购入库</div>
<div style="left:587.6px;top:425.38px;width:412.4px;height:32.93px;overflow:hidden">
<div class="r" style="left:0.0px;top:0;width:81.7px;background:#fff"><span class="l">LW</span></div>
<div class="r" style="left:81.7px;top:0;width:52.7px;background:#fff">次</div>
<div class="r n" style="left:134.4px;top:0;width:65.0px;background:#fff"><span class="d">17</span><span class="p">.</span><span class="d">000</span></div>
<div class="r n" style="left:199.4px;top:0;width:65.3px;background:#fff"><span class="d">1</span><span class="p">.</span><span class="d">000</span></div>
<div class="r n" style="left:264.7px;top:0;width:65.0px;background:#fff"><span class="d">1</span><span class="p">.</span><span class="d">000</span></div>
<div class="r n" style="left:329.7px;top:0;width:107.7px;background:#fff"><span class="d">500</span><span class="p">.</span><span class="d">00</span></div>
<div class="m" style="left:0;top:18px;width:437px;background:#d4d0c8">劳务</div>
</div>
<div class="c" style="left:6.4px;top:458.31px;width:62.8px;background:#fff"><span class="d">2005</span><span class="p h">-</span><span class="d">08</span><span class="p h">-</span><span class="d">19</span></div>
<div class="c" style="left:69.2px;top:458.31px;width:65.0px;background:#fff"><span class="l">SH</span><span class="d">00000009</span></div>
<div class="c" style="left:134.2px;top:458.31px;width:150.8px;background:#fff"><span class="d">002</span><span class="p b">|</span>镇江江南有限公司</div>
<div class="c" style="left:285.0px;top:458.31px;width:51.0px;background:#fff">采购员甲</div>
<div class="c" style="left:336.0px;top:458.31px;width:151.0px;background:#fff"><span class="d">0401</span><span class="p b">|</span>采购科</div>
<div class="c" style="left:487.0px;top:458.31px;width:100.6px;background:#fff"><span class="l">WGRK</span><span class="p b">|</span>外购入库</div>
<div style="left:587.6px;top:458.31px;width:412.4px;height:32.93px;overflow:hidden">
<div class="r" style="left:0.0px;top:0;width:81.7px;background:#fff"><span class="d">01005</span></div>
<div class="r" style="left:81.7px;top:0;width:52.7px;background:#fff">只</div>
<div class="r n" style="left:134.4px;top:0;width:65.0px;background:#fff"><span class="d">17</span><span class="p">.</span><span class="d">000</span></div>
<div class="r n" style="left:199.4px;top:0;width:65.3px;background:#fff"><span class="d">46</span><span class="p">.</span><span class="d">000</span></div>
<div class="r n" style="left:264.7px;top:0;width:65.0px;background:#fff"><span class="d">46</span><span class="p">.</span><span class="d">000</span></div>
<div class="r n" style="left:329.7px;top:0;width:107.7px;background:#fff"><span class="d">460</span><span class="p">.</span><span class="d">00</span></div>
<div class="m" style="left:0;top:18px;width:437px;background:#d4d0c8">摩擦橡皮</div>
</div>
<div class="c" style="left:6.4px;top:491.24px;width:62.8px;background:#fff"><span class="d">2005</span><span class="p h">-</span><span class="d">08</span><span class="p h">-</span><span class="d">19</span></div>
<div class="c" style="left:69.2px;top:491.24px;width:65.0px;background:#fff"><span class="l">SH</span><span class="d">00000007</span></div>
<div class="c" style="left:134.2px;top:491.24px;width:150.8px;background:#fff"><span class="d">002</span><span class="p b">|</span>镇江江南有限公司</div>
<div class="c" style="left:285.0px;top:491.24px;width:51.0px;background:#fff">采购员甲</div>
<div class="c" style="left:336.0px;top:491.24px;width:151.0px;background:#fff"><span class="d">0401</span><span class="p b">|</span>采购科</div>
<div class="c" style="left:487.0px;top:491.24px;width:100.6px;background:#fff"><span class="l">WGRK</span><span class="p b">|</span>外购入库</div>
<div style="left:587.6px;top:491.24px;width:412.4px;height:32.93px;overflow:hidden">
<div class="r" style="left:0.0px;top:0;width:81.7px;background:#fff"><span class="l">LW</span></div>
<div class="r" style="left:81.7px;top:0;width:52.7px;background:#fff">次</div>
<div class="r n" style="left:134.4px;top:0;width:65.0px;background:#fff"><span class="d">17</span><span class="p">.</span><span class="d">000</span></div>
<div class="r n" style="left:199.4px;top:0;width:65.3px;background:#fff"><span class="d">1</span><span class="p">.</span><span class="d">000</span></div>
<div class="r n" style="left:264.7px;top:0;width:65.0px;background:#fff"><span class="d">1</span><span class="p">.</span><span class="d">000</span></div>
<div class="r n" style="left:329.7px;top:0;width:107.7px;background:#fff"><span class="d">500</span><span class="p">.</span><span class="d">00</span></div>
<div class="m" style="left:0;top:18px;width:437px;background:#d4d0c8">劳务</div>
</div>
<div class="c" style="left:6.4px;top:524.17px;width:62.8px;background:#8583ec;border-bottom-color:#8583ec"></div>
<div class="c" style="left:69.2px;top:524.17px;width:65.0px;background:#8583ec;border-bottom-color:#8583ec">小计</div>
<div class="c" style="left:134.2px;top:524.17px;width:150.8px;background:#8583ec;border-bottom-color:#8583ec"><span class="d">002</span><span class="p b">|</span>镇江江南有限公司</div>
<div class="c" style="left:285.0px;top:524.17px;width:51.0px;background:#8583ec;border-bottom-color:#8583ec"></div>
<div class="c" style="left:336.0px;top:524.17px;width:151.0px;background:#8583ec;border-bottom-color:#8583ec"></div>
<div class="c" style="left:487.0px;top:524.17px;width:100.6px;background:#8583ec;border-bottom-color:#8583ec"></div>
<div style="left:587.6px;top:524.17px;width:412.4px;height:32.93px;overflow:hidden">
<div class="r" style="left:0.0px;top:0;width:81.7px;background:#8583ec"></div>
<div class="r" style="left:81.7px;top:0;width:52.7px;background:#8583ec"></div>
<div class="r n" style="left:134.4px;top:0;width:65.0px;background:#8583ec"></div>
<div class="r n" style="left:199.4px;top:0;width:65.3px;background:#8583ec"></div>
<div class="r n" style="left:264.7px;top:0;width:65.0px;background:#8583ec"></div>
<div class="r n" style="left:329.7px;top:0;width:107.7px;background:#8583ec"><span class="d">2</span><span class="p">,</span><span class="d">740</span><span class="p">.</span><span class="d">00</span></div>
<div class="m" style="left:0;top:18px;width:437px;background:#d4d0c8"></div>
</div>
<div class="c" style="left:6.4px;top:557.10px;width:62.8px;background:#fff"><span class="d">2005</span><span class="p h">-</span><span class="d">08</span><span class="p h">-</span><span class="d">19</span></div>
<div class="c" style="left:69.2px;top:557.10px;width:65.0px;background:#fff"><span class="l">SH</span><span class="d">00000003</span></div>
<div class="c" style="left:134.2px;top:557.10px;width:150.8px;background:#fff"><span class="d">003</span><span class="p b">|</span>马鞍山橡胶制品有<span class="p">.</span><span class="p">.</span><span class="p">.</span></div>
<div class="c" style="left:285.0px;top:557.10px;width:51.0px;background:#fff">采购员甲</div>
<div class="c" style="left:336.0px;top:557.10px;width:151.0px;background:#fff"><span class="d">0401</span><span class="p b">|</span>采购科</div>
<div class="c" style="left:487.0px;top:557.10px;width:100.6px;background:#fff"><span class="l">WGRK</span><span class="p b">|</span>外购入库</div>
<div style="left:587.6px;top:557.10px;width:412.4px;height:32.93px;overflow:hidden">
<div class="r" style="left:0.0px;top:0;width:81.7px;background:#fff"><span class="d">01010</span></div>
<div class="r" style="left:81.7px;top:0;width:52.7px;background:#fff">只</div>
<div class="r n" style="left:134.4px;top:0;width:65.0px;background:#fff"><span class="d">17</span><span class="p">.</span><span class="d">000</span></div>
<div class="r n" style="left:199.4px;top:0;width:65.3px;background:#fff"><span class="d">1</span><span class="p">,</span><span class="d">000</span><span class="p">.</span><span class="d">000</span></div>
<div class="r n" style="left:264.7px;top:0;width:65.0px;background:#fff"><span class="d">1</span><span class="p">,</span><span class="d">000</span><span class="p">.</span><span class="d">000</span></div>
<div class="r n" style="left:329.7px;top:0;width:107.7px;background:#fff"><span class="d">6</span><span class="p">,</span><span class="d">000</span><span class="p">.</span><span class="d">00</span></div>
<div class="m" style="left:0;top:18px;width:437px;background:#d4d0c8">内胎</div>
</div>
<div class="c" style="left:6.4px;top:590.03px;width:62.8px;background:#fff"><span class="d">2005</span><span class="p h">-</span><span class="d">08</span><span class="p h">-</span><span class="d">19</span></div>
<div class="c" style="left:69.2px;top:590.03px;width:65.0px;background:#fff"><span class="l">SH</span><span class="d">00000003</span></div>
<div class="c" style="left:134.2px;top:590.03px;width:150.8px;background:#fff"><span class="d">003</span><span class="p b">|</span>马鞍山橡胶制品有<span class="p">.</span><span class="p">.</span><span class="p">.</span></div>
<div class="c" style="left:285.0px;top:590.03px;width:51.0px;background:#fff">采购员甲</div>
<div class="c" style="left:336.0px;top:590.03px;width:151.0px;background:#fff"><span class="d">0401</span><span class="p b">|</span>采购科</div>
<div class="c" style="left:487.0px;top:590.03px;width:100.6px;background:#fff"><span class="l">WGRK</span><span class="p b">|</span>外购入库</div>
<div style="left:587.6px;top:590.03px;width:412.4px;height:32.93px;overflow:hidden">
<div class="r" style="left:0.0px;top:0;width:81.7px;background:#fff"><span class="d">01011</span></div>
<div class="r" style="left:81.7px;top:0;width:52.7px;background:#fff">只</div>
<div class="r n" style="left:134.4px;top:0;width:65.0px;background:#fff"><span class="d">17</span><span class="p">.</span><span class="d">000</span></div>
<div class="r n" style="left:199.4px;top:0;width:65.3px;background:#fff"><span class="d">1</span><span class="p">,</span><span class="d">000</span><span class="p">.</span><span class="d">000</span></div>
<div class="r n" style="left:264.7px;top:0;width:65.0px;background:#fff"><span class="d">1</span><span class="p">,</span><span class="d">000</span><span class="p">.</span><span class="d">000</span></div>
<div class="r n" style="left:329.7px;top:0;width:107.7px;background:#fff"><span class="d">9</span><span class="p">,</span><span class="d">000</span><span class="p">.</span><span class="d">00</span></div>
<div class="m" style="left:0;top:18px;width:437px;background:#d4d0c8">轴皮</div>
</div>
<div class="c" style="left:6.4px;top:622.96px;width:62.8px;background:#8583ec;border-bottom-color:#8583ec"></div>
<div class="c" style="left:69.2px;top:622.96px;width:65.0px;background:#8583ec;border-bottom-color:#8583ec">小计</div>
<div class="c" style="left:134.2px;top:622.96px;width:150.8px;background:#8583ec;border-bottom-color:#8583ec"><span class="d">003</span><span class="p b">|</span>马鞍山橡胶制品有<span class="p">.</span><span class="p">.</span><span class="p">.</span></div>
<div class="c" style="left:285.0px;top:622.96px;width:51.0px;background:#8583ec;border-bottom-color:#8583ec"></div>
<div class="c" style="left:336.0px;top:622.96px;width:151.0px;background:#8583ec;border-bottom-color:#8583ec"></div>
<div class="c" style="left:487.0px;top:622.96px;width:100.6px;background:#8583ec;border-bottom-color:#8583ec"></div>
<div style="left:587.6px;top:622.96px;width:412.4px;height:32.93px;overflow:hidden">
<div class="r" style="left:0.0px;top:0;width:81.7px;background:#8583ec"></div>
<div class="r" style="left:81.7px;top:0;width:52.7px;background:#8583ec"></div>
<div class="r n" style="left:134.4px;top:0;width:65.0px;background:#8583ec"></div>
<div class="r n" style="left:199.4px;top:0;width:65.3px;background:#8583ec"></div>
<div class="r n" style="left:264.7px;top:0;width:65.0px;background:#8583ec"></div>
<div class="r n" style="left:329.7px;top:0;width:107.7px;background:#8583ec"><span class="d">15</span><span class="p">,</span><span class="d">000</span><span class="p">.</span><span class="d">00</span></div>
<div class="m" style="left:0;top:18px;width:437px;background:#d4d0c8"></div>
</div>
<div style="left:587.6px;top:227.8px;width:1px;height:428px;background:#b4b4b4"></div>
<div style="left:6.4px;top:227.8px;width:62.8px;height:32.9px;border:1px dotted #c8c090"></div>
<div style="left:1000px;top:210.8px;width:16px;height:445.4px;background:#e9e7e2"></div>
<div class="btn2" style="left:1000px;top:210.8px;width:16px;height:17px"><svg style="left:4px;top:6px" width="7" height="4" viewBox="0 0 7 4"><path d="M0 4H7L3.5 0Z" fill="#000"/></svg></div>
<div class="btn2" style="left:1000px;top:227.8px;width:16px;height:13.5px"></div>
<div class="btn2" style="left:1000px;top:640.2px;width:16px;height:16px"><svg style="left:4px;top:6px" width="7" height="4" viewBox="0 0 7 4"><path d="M0 0H7L3.5 4Z" fill="#000"/></svg></div>
<div style="left:6px;top:656.2px;width:994px;height:16px;background:#e9e7e2"></div>
<div class="btn2" style="left:6px;top:656.2px;width:16px;height:16px"><svg style="left:5px;top:4px" width="4" height="7" viewBox="0 0 4 7"><path d="M4 0V7L0 3.5Z" fill="#000"/></svg></div>
<div class="btn2" style="left:22px;top:656.2px;width:16px;height:16px"></div>
<div class="btn2" style="left:984px;top:656.2px;width:16px;height:16px"><svg style="left:6px;top:4px" width="4" height="7" viewBox="0 0 4 7"><path d="M0 0V7L4 3.5Z" fill="#000"/></svg></div>
<div style="left:1020px;top:74px;width:1px;height:619px;background:#707070"></div>
<div style="left:1023px;top:0;width:1px;height:693px;background:#404040"></div>
<div style="left:4px;top:672.5px;width:1017px;height:21px;border-left:1px solid #fff;border-top:1px solid #fff"></div>
<div style="left:5px;top:674.5px;width:1014px;height:19px;border-left:1px solid #6a6a6a;border-top:1px solid #808080;border-right:2px solid #fff;text-align:center;padding-top:3px">显示发票明细</div>
</div>
<div id="wm" style="position:absolute;left:0;top:0;width:800px;height:541px;pointer-events:none;overflow:hidden">
<svg style="position:absolute;left:668px;top:494px" width="30" height="28" viewBox="0 0 30 28"><path d="M9 2h9l-6 10 5 12h-7L2 13z" fill="#6c7ea6" opacity=".8"/><path d="M14 12c2-6 8-9 13-6 2 3 1 7-2 9-3-3-7-3-9 1z" fill="#e08a5c" opacity=".85"/><path d="M16 24l9-9c1 3 0 7-3 9z" fill="#6c7ea6" opacity=".8"/></svg>
<div style="position:absolute;left:696px;top:493px;font-family:'Liberation Sans','Noto Sans CJK SC',sans-serif;font-size:24px;line-height:30px;color:#5d7099;opacity:.78;white-space:nowrap;letter-spacing:-.5px">泛普软件</div>
<div style="position:absolute;left:671px;top:517px;font-family:'Liberation Serif',serif;font-weight:bold;font-size:13.5px;line-height:18px;color:#d8683a;opacity:.8;white-space:nowrap;letter-spacing:.37px">www.fanpusoft.com</div>
</div>
</body></html>
